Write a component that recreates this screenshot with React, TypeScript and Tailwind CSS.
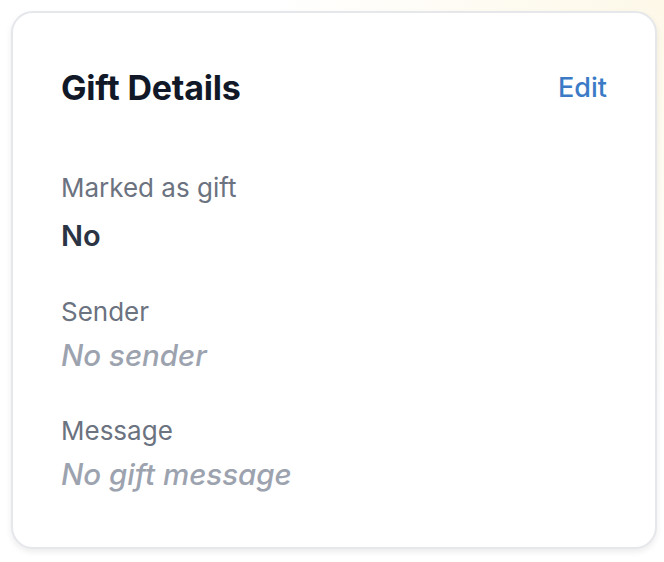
import React from 'react';

interface DetailRowProps {
  label: string;
  value: string;
  empty?: boolean;
  first?: boolean;
}

const DetailRow: React.FC<DetailRowProps> = ({ label, value, empty, first }) => (
  <div className="flex flex-col">
    <div className="text-[26px] leading-[32px] text-[#6b7280]">{label}</div>
    <div
      className={
        empty
          ? 'mt-[9px] text-[29.5px] leading-[36px] italic font-medium text-[#9ca3af]'
          : first
          ? 'mt-[14px] text-[29px] leading-[36px] font-semibold text-[#2a3444]'
          : 'mt-[9px] text-[29px] leading-[36px] font-semibold text-[#2a3444]'
      }
    >
      {value}
    </div>
  </div>
);

export default function App() {
  return (
    <div
      className="w-[664px] h-[562px] p-[11px] pr-[7px] bg-[radial-gradient(circle_at_100%_0%,#fdf8e8_0%,#ffffff_45%)]"
      style={{ fontFamily: 'Inter, "Noto Sans", sans-serif' }}
    >
      <div className="h-[538px] rounded-[22px] border-2 border-[#e5e7eb] bg-white shadow-[0_3px_6px_rgba(0,0,0,0.08)] px-[48px] pt-[55px]">
        <div className="flex items-center justify-between h-[40px]">
          <h2 className="text-[34px] leading-[40px] font-bold text-[#111827] tracking-[-0.2px]">
            Gift Details
          </h2>
          <button className="text-[27px] leading-[32px] font-medium text-[#3b7bc6]">Edit</button>
        </div>
        <div className="mt-[64px] flex flex-col gap-[42px]">
          <DetailRow label="Marked as gift" value="No" first />
          <DetailRow label="Sender" value="No sender" empty />
          <DetailRow label="Message" value="No gift message" empty />
        </div>
      </div>
    </div>
  );
}
